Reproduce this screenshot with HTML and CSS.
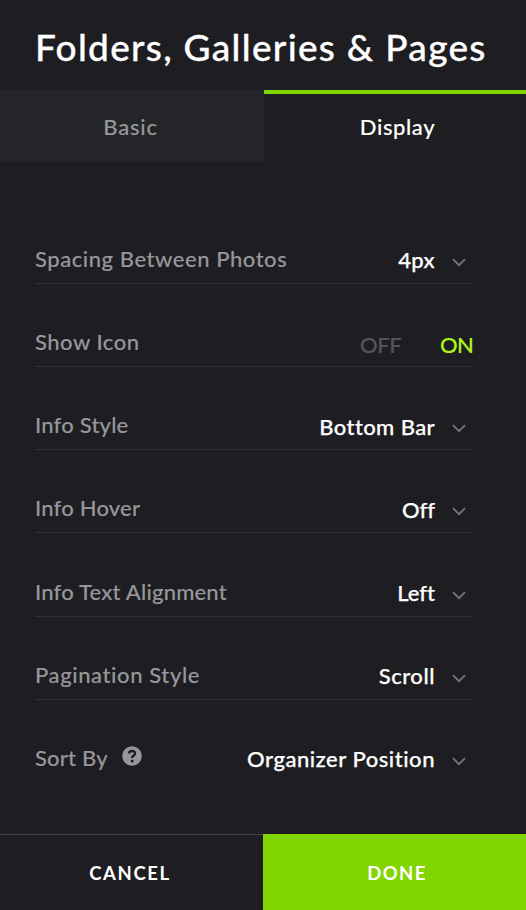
FILE: index.html
```
<!DOCTYPE html>
<html lang="en">
<head>
<meta charset="utf-8">
<title>Folders, Galleries &amp; Pages</title>
<link rel="stylesheet" href="styles.css">
</head>
<body>
<svg class="defs" aria-hidden="true">
  <symbol id="chevron" viewBox="0 0 14 9"><path d="M1 1.2 7 7.2 13 1.2" fill="none" stroke="currentColor" stroke-width="1.7"/></symbol>
</svg>
<main class="panel">
  <header class="heading"><h1 class="title">Folders, Galleries &amp; Pages</h1></header>
  <nav class="tabs">
    <a class="tab basic">Basic</a>
    <a class="tab active">Display</a>
  </nav>
  <section class="settings">
    <div class="row"><span class="label spacing">Spacing Between Photos</span><span class="value px">4px</span><svg class="chevron"><use href="#chevron"/></svg></div>
    <div class="row"><span class="label show">Show Icon</span><span class="off">OFF</span><span class="on">ON</span></div>
    <div class="row"><span class="label info-style">Info Style</span><span class="value bottom">Bottom Bar</span><svg class="chevron"><use href="#chevron"/></svg></div>
    <div class="row"><span class="label hover">Info Hover</span><span class="value v-off">Off</span><svg class="chevron"><use href="#chevron"/></svg></div>
    <div class="row"><span class="label align">Info Text Alignment</span><span class="value left">Left</span><svg class="chevron"><use href="#chevron"/></svg></div>
    <div class="row"><span class="label pagination">Pagination Style</span><span class="value scroll">Scroll</span><svg class="chevron"><use href="#chevron"/></svg></div>
    <div class="row"><span class="label sort">Sort By</span><svg class="help" viewBox="0 0 20 20"><circle cx="10" cy="10" r="9.8" fill="#97979b"/><path d="M6.9 7.5Q7.2 5 10 5Q13 5 13 7.4Q13 8.9 11.4 9.8Q10.1 10.5 10.1 12" fill="none" stroke="#1e1e22" stroke-width="2.4"/><circle cx="10.1" cy="14.9" r="1.5" fill="#1e1e22"/></svg><span class="value organizer">Organizer Position</span><svg class="chevron"><use href="#chevron"/></svg></div>
  </section>
  <footer class="actions">
    <button class="cancel">CANCEL</button>
    <button class="done">DONE</button>
  </footer>
</main>
</body>
</html>
```
FILE: styles.css
```
* { box-sizing: border-box; }
body { margin: 0; background: #1e1e22; color: #fff; font: 500 22px/30px Lato, "Liberation Sans", sans-serif; font-variant-ligatures: none; -webkit-text-stroke: .12px currentColor; }
.defs { display: none; }
.panel { width: 526px; height: 910px; display: flex; flex-direction: column; overflow: hidden; }
.heading { height: 90px; padding: 22px 0 0 35px; }
.title { margin: 0; font-size: 37px; line-height: 50px; font-weight: 500; white-space: nowrap; letter-spacing: 1.3px; -webkit-text-stroke-width: .3px; }
.tabs { height: 72px; display: grid; grid-template-columns: 264px 262px; }
.tab { text-align: center; padding-top: 22px; background: #242529; color: #97979b; letter-spacing: .8px; }
.basic { padding-right: 3px; }
.tab.active { background: #1e1e22; color: #fff; border-top: 4px solid #82d600; padding: 18px 0 0 5px; letter-spacing: .6px; }
.settings { height: 672px; padding: 38.6px 53px 0 35px; }
.row { height: 83.2px; display: flex; align-items: flex-end; border-bottom: 1px solid #303034; padding-bottom: 9px; white-space: nowrap; }
.row:last-child { border-bottom-color: transparent; }
.label { color: #97979b; letter-spacing: .2px; }
.spacing, .pagination { letter-spacing: .55px; }
.pagination { letter-spacing: .6px; }
.show { letter-spacing: .5px; }
.value { margin: 0 17px -1.5px auto; letter-spacing: .3px; -webkit-text-stroke-width: .25px; }
.bottom { letter-spacing: .4px; }
.v-off { letter-spacing: 0; }
.scroll, .organizer { letter-spacing: .53px; }
.left { letter-spacing: 0; }
.chevron { width: 14px; height: 9px; color: #77777b; margin: 0 7px 7px 0; }
.off { margin: 0 39px -3.5px auto; color: #55555a; letter-spacing: -.5px; }
.on { margin-bottom: -3.5px; color: #b0f51a; letter-spacing: -.8px; }
.help { width: 20px; height: 20px; margin: 0 0 7px 14px; }
.actions { height: 76px; display: grid; grid-template-columns: 263px 263px; }
.actions button { border: 0; border-top: 1px solid #424246; padding: 1px 3px 0 0; margin: 0; background: #1e1e22; color: #fff; font: 700 18.5px/30px Lato, sans-serif; letter-spacing: 1.6px; -webkit-text-stroke-width: 0; }
.actions .done { background: #82d600; border-color: #82d600; padding-left: 8px; letter-spacing: 1.4px; }
```
